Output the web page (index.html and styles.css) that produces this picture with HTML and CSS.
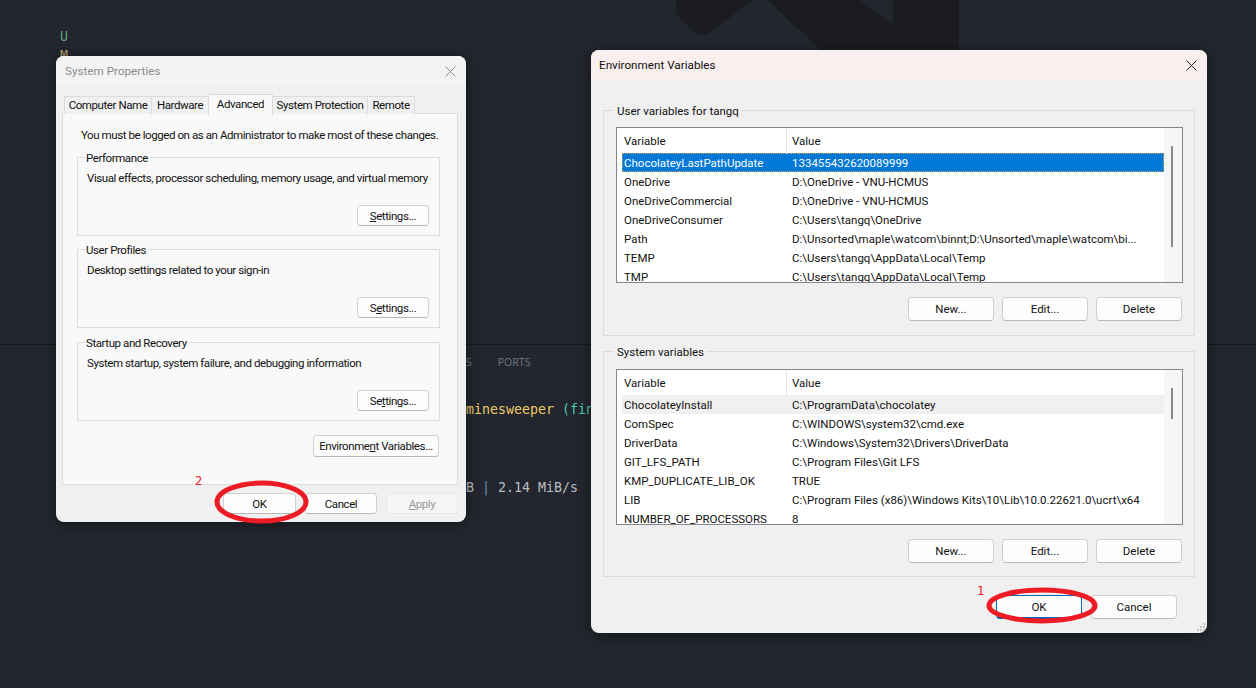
FILE: index.html
```html
<!DOCTYPE html>
<html>
  <head>
    <meta charset="UTF-8">
    <title>Environment Variables</title>
    <link rel="stylesheet" href="styles.css">
  </head>
  <body>
    <div id="ide">
      <div id="editor">
        <svg class="watermark" width="1256" height="344" viewBox="0 0 1256 344">
          <path d="M676 0V10Q676 14 680 18L696 33Q703 37 710 32L753 0Z"/>
          <path d="M767 0L821 50V344H959V0H893V25L860 0Z"/>
        </svg>
        <div class="scm">
          <p class="scm-u">U</p>
          <p class="scm-m">M</p>
        </div>
      </div>
      <div id="terminal">
        <div class="term-tabs"><span>S</span><span class="ports">PORTS</span></div>
        <p class="term-line one"><span class="yellow">minesweeper </span><span class="teal">(fin</span></p>
        <p class="term-line two">B <span class="pipe">|</span> 2.14 MiB/s</p>
      </div>
    </div>

    <div class="window sysprops">
      <div class="titlebar dim">
        <span>System Properties</span>
        <svg class="close" width="11" height="11" viewBox="0 0 11 11"><path d="M.5.5l10 10M10.5.5l-10 10"/></svg>
      </div>
      <div class="tabs">
        <div class="tab t1">Computer Name</div>
        <div class="tab t2">Hardware</div>
        <div class="tab t3 active">Advanced</div>
        <div class="tab t4">System Protection</div>
        <div class="tab t5">Remote</div>
      </div>
      <div class="panel">
        <p class="notice">You must be logged on as an Administrator to make most of these changes.</p>
        <div class="group">
          <div class="group-title">Performance</div>
          <p>Visual effects, processor scheduling, memory usage, and virtual memory</p>
          <button class="btn settings"><u>S</u>ettings...</button>
        </div>
        <div class="group">
          <div class="group-title">User Profiles</div>
          <p>Desktop settings related to your sign-in</p>
          <button class="btn settings">S<u>e</u>ttings...</button>
        </div>
        <div class="group startup">
          <div class="group-title">Startup and Recovery</div>
          <p>System startup, system failure, and debugging information</p>
          <button class="btn settings">Se<u>t</u>tings...</button>
        </div>
        <button class="btn envbtn">Environme<u>n</u>t Variables...</button>
      </div>
      <div class="actions">
        <button class="btn">OK</button>
        <button class="btn">Cancel</button>
        <button class="btn disabled"><u>A</u>pply</button>
      </div>
    </div>

    <div class="window envvars">
      <div class="titlebar pink">
        <span>Environment Variables</span>
        <svg class="close" width="11" height="11" viewBox="0 0 11 11"><path d="M.5.5l10 10M10.5.5l-10 10"/></svg>
      </div>
      <div class="env-body">
        <div class="group env-group">
          <div class="group-title">User variables for tangq</div>
          <div class="list">
            <div class="list-head"><span>Variable</span><span>Value</span></div>
            <div class="row selected"><span>ChocolateyLastPathUpdate</span><span>133455432620089999</span></div>
            <div class="row"><span>OneDrive</span><span>D:\OneDrive - VNU-HCMUS</span></div>
            <div class="row"><span>OneDriveCommercial</span><span>D:\OneDrive - VNU-HCMUS</span></div>
            <div class="row"><span>OneDriveConsumer</span><span>C:\Users\tangq\OneDrive</span></div>
            <div class="row"><span>Path</span><span>D:\Unsorted\maple\watcom\binnt;D:\Unsorted\maple\watcom\bi...</span></div>
            <div class="row"><span>TEMP</span><span>C:\Users\tangq\AppData\Local\Temp</span></div>
            <div class="row"><span>TMP</span><span>C:\Users\tangq\AppData\Local\Temp</span></div>
            <div class="scrollbar"><div class="thumb thumb-user"></div></div>
          </div>
          <div class="list-buttons">
            <button class="btn">New...</button>
            <button class="btn">Edit...</button>
            <button class="btn">Delete</button>
          </div>
        </div>
        <div class="group env-group sys-group">
          <div class="group-title">System variables</div>
          <div class="list">
            <div class="list-head"><span>Variable</span><span>Value</span></div>
            <div class="row hover"><span>ChocolateyInstall</span><span>C:\ProgramData\chocolatey</span></div>
            <div class="row"><span>ComSpec</span><span>C:\WINDOWS\system32\cmd.exe</span></div>
            <div class="row"><span>DriverData</span><span>C:\Windows\System32\Drivers\DriverData</span></div>
            <div class="row"><span>GIT_LFS_PATH</span><span>C:\Program Files\Git LFS</span></div>
            <div class="row"><span>KMP_DUPLICATE_LIB_OK</span><span>TRUE</span></div>
            <div class="row"><span>LIB</span><span>C:\Program Files (x86)\Windows Kits\10\Lib\10.0.22621.0\ucrt\x64</span></div>
            <div class="row"><span>NUMBER_OF_PROCESSORS</span><span>8</span></div>
            <div class="scrollbar"><div class="thumb thumb-sys"></div></div>
          </div>
          <div class="list-buttons">
            <button class="btn">New...</button>
            <button class="btn">Edit...</button>
            <button class="btn">Delete</button>
          </div>
        </div>
        <div class="env-actions">
          <button class="btn default">OK</button>
          <button class="btn">Cancel</button>
        </div>
      </div>
      <svg class="grip" width="10" height="10" viewBox="0 0 10 10">
        <rect x="7" y="1" width="2" height="2"/><rect x="4" y="4" width="2" height="2"/><rect x="7" y="4" width="2" height="2"/>
        <rect x="1" y="7" width="2" height="2"/><rect x="4" y="7" width="2" height="2"/><rect x="7" y="7" width="2" height="2"/>
      </svg>
    </div>

    <!-- red marks drawn on top of the screenshot -->
    <svg class="marks" width="1256" height="688" viewBox="0 0 1256 688">
      <ellipse cx="261.5" cy="502" rx="44.5" ry="19"/>
      <ellipse cx="1042" cy="605.5" rx="53" ry="15.5"/>
    </svg>
    <span class="mark-num num-one">1</span>
    <span class="mark-num num-two">2</span>
  </body>
</html>
```

FILE: styles.css
```css
* { box-sizing: border-box; }
html, body { margin: 0; height: 100%; overflow: hidden; }
body { background: #23262e; font: 12px Roboto, sans-serif; color: #111; }
p { margin: 0; }

#ide { display: flex; flex-direction: column; height: 688px; }
#editor { position: relative; height: 345px; border-bottom: 1px solid #17181b; flex: none; }
.watermark { position: absolute; left: 0; top: 0; }
.watermark path { fill: #1b1c1f; }
.scm { padding: 27px 0 0 60px; font: 13.3px "DejaVu Sans Mono", monospace; line-height: 19px; position: relative; }
.scm-u { color: #5fa37c; }
.scm-m { color: #b39a6b; }

#terminal { flex: 1; padding-left: 466px; font: 13.3px "DejaVu Sans Mono", monospace; }
.term-tabs { font: 10.5px "Noto Sans", sans-serif; color: #6f737c; height: 34px; line-height: 34px; }
.ports { margin-left: 26px; }
.term-line { color: #b9bcc2; line-height: 20px; }
.one { margin-top: 21px; }
.two { margin-top: 58px; }
.yellow { color: #ecc96a; }
.teal { color: #4ec9b0; }
.pipe { color: #6f8fb0; }

.window { position: absolute; background: #f0f0f0; border-radius: 8px; box-shadow: 0 2px 14px rgba(0, 0, 0, .45); overflow: hidden; }
.sysprops { left: 56px; top: 56px; width: 410px; height: 466px; }
.envvars { left: 591px; top: 50px; width: 616px; height: 583px; }
.titlebar { height: 30px; display: flex; align-items: center; justify-content: space-between; padding: 0 10px 0 8px; font-size: 11.7px; }
.titlebar.dim { background: #f3f3f3; color: #8b8b8b; padding-left: 9px; }
.pink { background: #f9efef; }
.close path { stroke: #222; stroke-width: 1; fill: none; }
.dim .close path { stroke: #8a8a8a; }

.tabs { display: flex; height: 28px; padding: 7px 0 0 8px; align-items: flex-end; font-size: 11.5px; letter-spacing: -.42px; }
.tab { height: 18px; line-height: 17px; text-align: center; white-space: nowrap; background: #f0f0f0; border: 1px solid #dcdcdc; border-bottom: 0; margin-right: -1px; }
.tab.active { height: 21px; background: #f9f9f9; margin-bottom: -1px; position: relative; z-index: 1; line-height: 18px; }
.t1 { width: 88px; }
.t2 { width: 58px; }
.t3 { width: 65px; }
.t4 { width: 96px; }
.t5 { width: 48px; }

.panel { margin: -1px 8px 0 6px; height: 372px; background: #f9f9f9; border: 1px solid #dcdcdc; padding: 13px 17px 0 14px; font-size: 11.5px; letter-spacing: -.42px; }
.notice { line-height: 16px; padding-left: 4px; margin-bottom: 14px; white-space: nowrap; }
.group { border: 1px solid #dcdcdc; height: 79px; margin-bottom: 13px; padding: 0 10px 0 9px; }
.group-title { margin: -8px 0 0 -1px; width: fit-content; padding: 0 2px 0 0; background: #f9f9f9; line-height: 16px; height: 16px; }
.group p { margin-top: 4px; line-height: 16px; white-space: nowrap; }
.startup { margin-top: 14px; margin-bottom: 14px; }
.btn { display: block; font: inherit; letter-spacing: inherit; color: #111; background: #fdfdfd; border: 1px solid #d0d0d0; border-bottom-color: #b8b8b8; border-radius: 4px; padding: 0; text-align: center; white-space: nowrap; }
.settings { width: 72px; height: 21px; margin: 19px 0 0 auto; }
.envbtn { width: 126px; height: 22px; margin: 0 1px 0 auto; }

.actions { display: grid; grid-template-columns: 73px 72px 72px; gap: 9px; padding: 8px 8px 0 0; justify-content: end; font-size: 11.5px; letter-spacing: -.42px; }
.actions .btn { height: 21px; }
.actions .disabled { background: #f5f5f5; border-color: #e6e6e6; color: #9a9a9a; }

.env-body { padding: 30px 12px 0; font-size: 11.5px; }
.env-group { height: 226px; margin-bottom: 15px; padding: 0 11px 0 12px; }
.env-group .group-title { background: #f0f0f0; padding: 0 3px 0 4px; margin: -8px 0 0 -3px; }
.list { position: relative; margin-top: 8px; height: 156px; background: #fff; border: 1px solid #82878f; overflow: hidden; padding-left: 5px; }
.sys-group .list { margin-top: 9px; }
.list-head { display: grid; grid-template-columns: 164px 1fr; height: 25px; line-height: 26px; margin-right: 18px; background: #fff; }
.list-head span { padding-left: 2px; }
.list-head span + span { border-left: 1px solid #e4e4e4; padding-left: 5px; }
.row { display: grid; grid-template-columns: 168px 1fr; height: 19px; line-height: 20px; padding-left: 2px; margin-right: 18px; white-space: nowrap; }
.row.selected { background: #0078d7; color: #fff; outline: 1px dotted #d8a060; outline-offset: -1px; }
.row.hover { background: #f0f0f0; }
.scrollbar { position: absolute; right: 0; top: 0; bottom: 0; width: 18px; background: #f6f6f6; }
.thumb { position: absolute; left: 7px; width: 2px; background: #8a8a8a; }
.thumb-user { top: 18px; height: 101px; }
.thumb-sys { top: 18px; height: 31px; }
.list-buttons { display: grid; grid-template-columns: repeat(3, 86px); gap: 8px; justify-content: end; margin-top: 14px; padding-right: 1px; }
.list-buttons .btn { height: 24px; }
.env-actions { display: grid; grid-template-columns: 86px 86px; gap: 9px; justify-content: end; padding-right: 18px; margin-top: 18px; }
.env-actions .btn { height: 24px; }
.btn.default { border: 1px solid #0067c0; border-bottom-width: 2px; }
.grip { position: absolute; right: 1px; bottom: 1px; }
.grip rect { fill: #c4c4c4; }

.marks { position: absolute; left: 0; top: 0; }
.marks ellipse { fill: none; stroke: #ed1c24; stroke-width: 5; }
.mark-num { position: absolute; color: #ed1c24; font: 12px "DejaVu Sans Mono", monospace; line-height: 14px; }
.num-one { left: 977px; top: 584px; }
.num-two { left: 195px; top: 474px; }
```
